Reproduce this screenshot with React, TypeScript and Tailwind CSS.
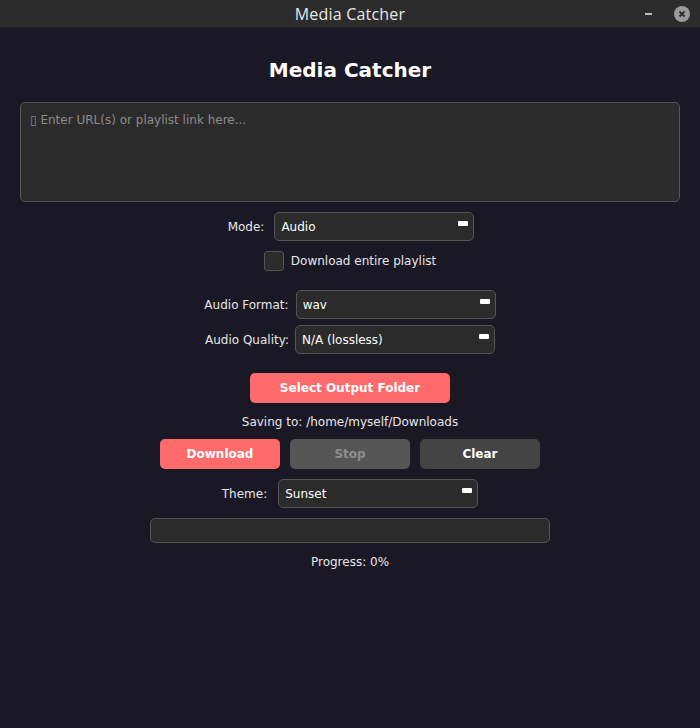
import React from "react";

function Combo({ value, width = "w-[200px]" }: { value: string; width?: string }) {
  return (
    <div
      className={`${width} h-[29px] relative flex items-center rounded-[5px] border border-[#555555] bg-[#2b2b2b] px-[6px] text-[12px] text-white`}
    >
      {value}
      <span className="absolute right-[5px] top-[8px] w-[10px] h-[5px] rounded-[1px] bg-white" />
    </div>
  );
}

function Row({ label, value, gap = "gap-[7px]" }: { label: string; value: string; gap?: string }) {
  return (
    <div className={`flex items-center justify-center ${gap}`}>
      <span className="text-[12px] text-[#e6e6e6]">{label}</span>
      <Combo value={value} />
    </div>
  );
}

export default function App() {
  return (
    <div
      className="w-[700px] h-[728px] flex flex-col bg-[#1b1826] text-white"
      style={{ fontFamily: '"DejaVu Sans", sans-serif' }}
    >
      {/* window title bar */}
      <div className="h-[28px] shrink-0 relative flex items-center justify-center bg-[#2c2c2c] border-b border-[#222]">
        <span
          className="text-[16px] text-[#e8e8e8] tracking-[0.2px]"
          style={{ fontFamily: '"Open Sans", sans-serif' }}
        >
          Media Catcher
        </span>
        <span className="absolute right-[48px] top-[13px] w-[7px] h-[2px] bg-[#bdbdbd]" />
        <span className="absolute right-[10px] top-[6px] w-[16px] h-[16px] rounded-full bg-[#9a9a9a] flex items-center justify-center">
          <svg width="8" height="8" viewBox="0 0 8 8">
            <path d="M1.5 1.5 L6.5 6.5 M6.5 1.5 L1.5 6.5" stroke="#2c2c2c" strokeWidth="1.8" />
          </svg>
        </span>
      </div>

      <div className="flex flex-col items-center px-[20px]">
        <h1 className="mt-[30px] text-[20px] leading-[24px] font-bold">Media Catcher</h1>

        <div className="mt-[20px] w-full h-[100px] rounded-[5px] border border-[#555555] bg-[#2b2b2b] px-[9px] py-[8px] text-[12px] text-[#8c8c8c]">
          ▯ Enter URL(s) or playlist link here...
        </div>

        <div className="mt-[10px] flex items-center gap-[10px] pl-[2px]">
          <span className="text-[12px] text-[#e6e6e6]">Mode:</span>
          <Combo value="Audio" />
        </div>

        <div className="mt-[10px] flex items-center gap-[7px]">
          <span className="w-[20px] h-[20px] rounded-[3px] border border-[#555555] bg-[#2b2b2b]" />
          <span className="text-[12px] text-[#e6e6e6]">Download entire playlist</span>
        </div>

        <div className="mt-[19px] flex flex-col gap-[6px]">
          <Row label="Audio Format:" value="wav" gap="gap-[7px]" />
          <Row label="Audio Quality:" value="N/A (lossless)" gap="gap-[6px]" />
        </div>

        <button className="mt-[19px] w-[200px] h-[30px] rounded-[5px] bg-[#ff6b6b] text-[12px] font-bold text-white">
          Select Output Folder
        </button>

        <div className="mt-[10px] text-[12px] text-[#e6e6e6]">Saving to: /home/myself/Downloads</div>

        <div className="mt-[8px] flex gap-[10px]">
          <button className="w-[120px] h-[30px] rounded-[5px] bg-[#ff6b6b] text-[12px] font-bold text-white">
            Download
          </button>
          <button className="w-[120px] h-[30px] rounded-[5px] bg-[#555555] text-[12px] font-bold text-[#8e8e8e]">
            Stop
          </button>
          <button className="w-[120px] h-[30px] rounded-[5px] bg-[#444444] text-[12px] font-bold text-white">
            Clear
          </button>
        </div>

        <div className="mt-[10px] flex items-center gap-[11px]">
          <span className="text-[12px] text-[#e6e6e6]">Theme:</span>
          <Combo value="Sunset" />
        </div>

        <div className="mt-[10px] w-[400px] h-[25px] rounded-[5px] border border-[#555555] bg-[#2b2b2b]" />

        <div className="mt-[10px] text-[12px] text-[#e6e6e6]">Progress: 0%</div>
      </div>
    </div>
  );
}
